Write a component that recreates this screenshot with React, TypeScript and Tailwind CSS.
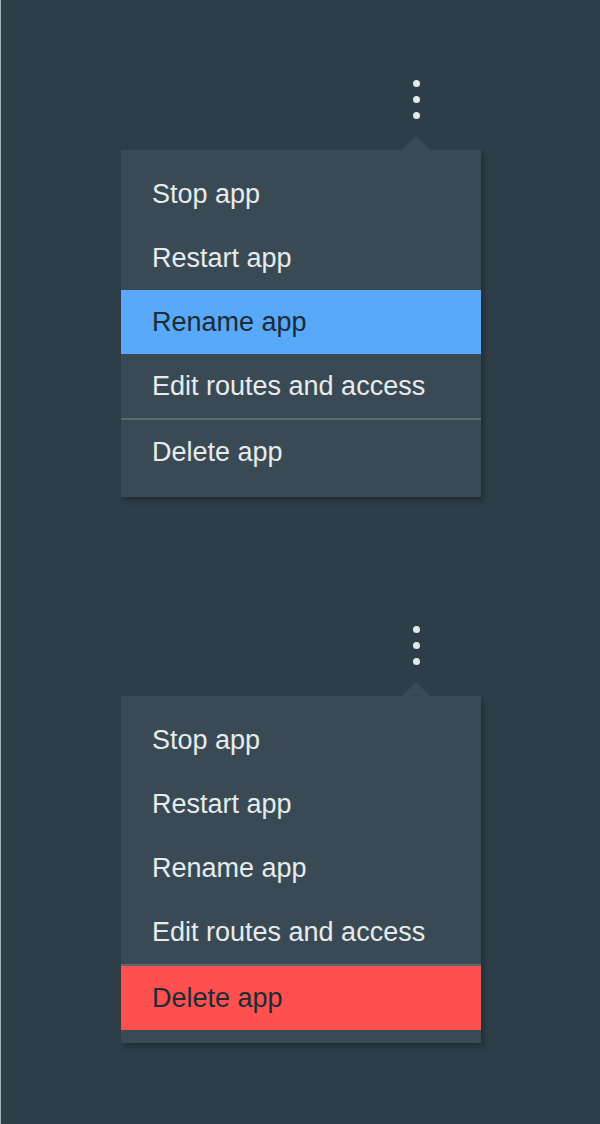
import React from 'react';

type Item = { label: string };

const items: Item[] = [
  { label: 'Stop app' },
  { label: 'Restart app' },
  { label: 'Rename app' },
  { label: 'Edit routes and access' },
  { label: 'Delete app' },
];

function Dots() {
  return (
    <div className="flex flex-col items-center gap-[9px] w-[28px]">
      <span className="block h-[7px] w-[7px] rounded-full bg-[#e3e9ed]" />
      <span className="block h-[7px] w-[7px] rounded-full bg-[#e3e9ed]" />
      <span className="block h-[7px] w-[7px] rounded-full bg-[#e3e9ed]" />
    </div>
  );
}

function OverflowMenu({ active, tone }: { active: number; tone: 'blue' | 'red' }) {
  return (
    <div className="ml-[120px] w-[360px] flex flex-col">
      {/* trigger + caret, centered at x=416 */}
      <div className="flex flex-col items-center ml-[281px] w-[28px]">
        <Dots />
        <div className="mt-[17px] h-0 w-0 border-x-[14px] border-b-[14px] border-x-transparent border-b-[#3a4a55]" />
      </div>

      <div className="bg-[#3a4a55] pt-[12px] pb-[13px] shadow-[3px_4px_6px_rgba(0,0,0,0.28)]">
        {items.map((item, i) => {
          const isActive = i === active;
          const bg = isActive ? (tone === 'blue' ? 'bg-[#58a9f9]' : 'bg-[#ff5050]') : '';
          const text = isActive ? 'text-[#1d2b35]' : 'text-[#e6ebee]';
          return (
            <React.Fragment key={item.label}>
              {i === 4 && <div className="h-[2px] bg-[#5a6870]" />}
              <div className={`h-[64px] flex items-center pl-[31px] text-[27px] ${bg} ${text}`}>
                {item.label}
              </div>
            </React.Fragment>
          );
        })}
      </div>
    </div>
  );
}

export default function App() {
  return (
    <div
      className="min-h-[1124px] w-[600px] bg-[#2e3e49] border-l border-[#aab3b8] pt-[80px]"
      style={{ fontFamily: '"Liberation Sans", Arial, sans-serif' }}
    >
      <OverflowMenu active={2} tone="blue" />
      <div className="h-[129px]" />
      <OverflowMenu active={4} tone="red" />
    </div>
  );
}
